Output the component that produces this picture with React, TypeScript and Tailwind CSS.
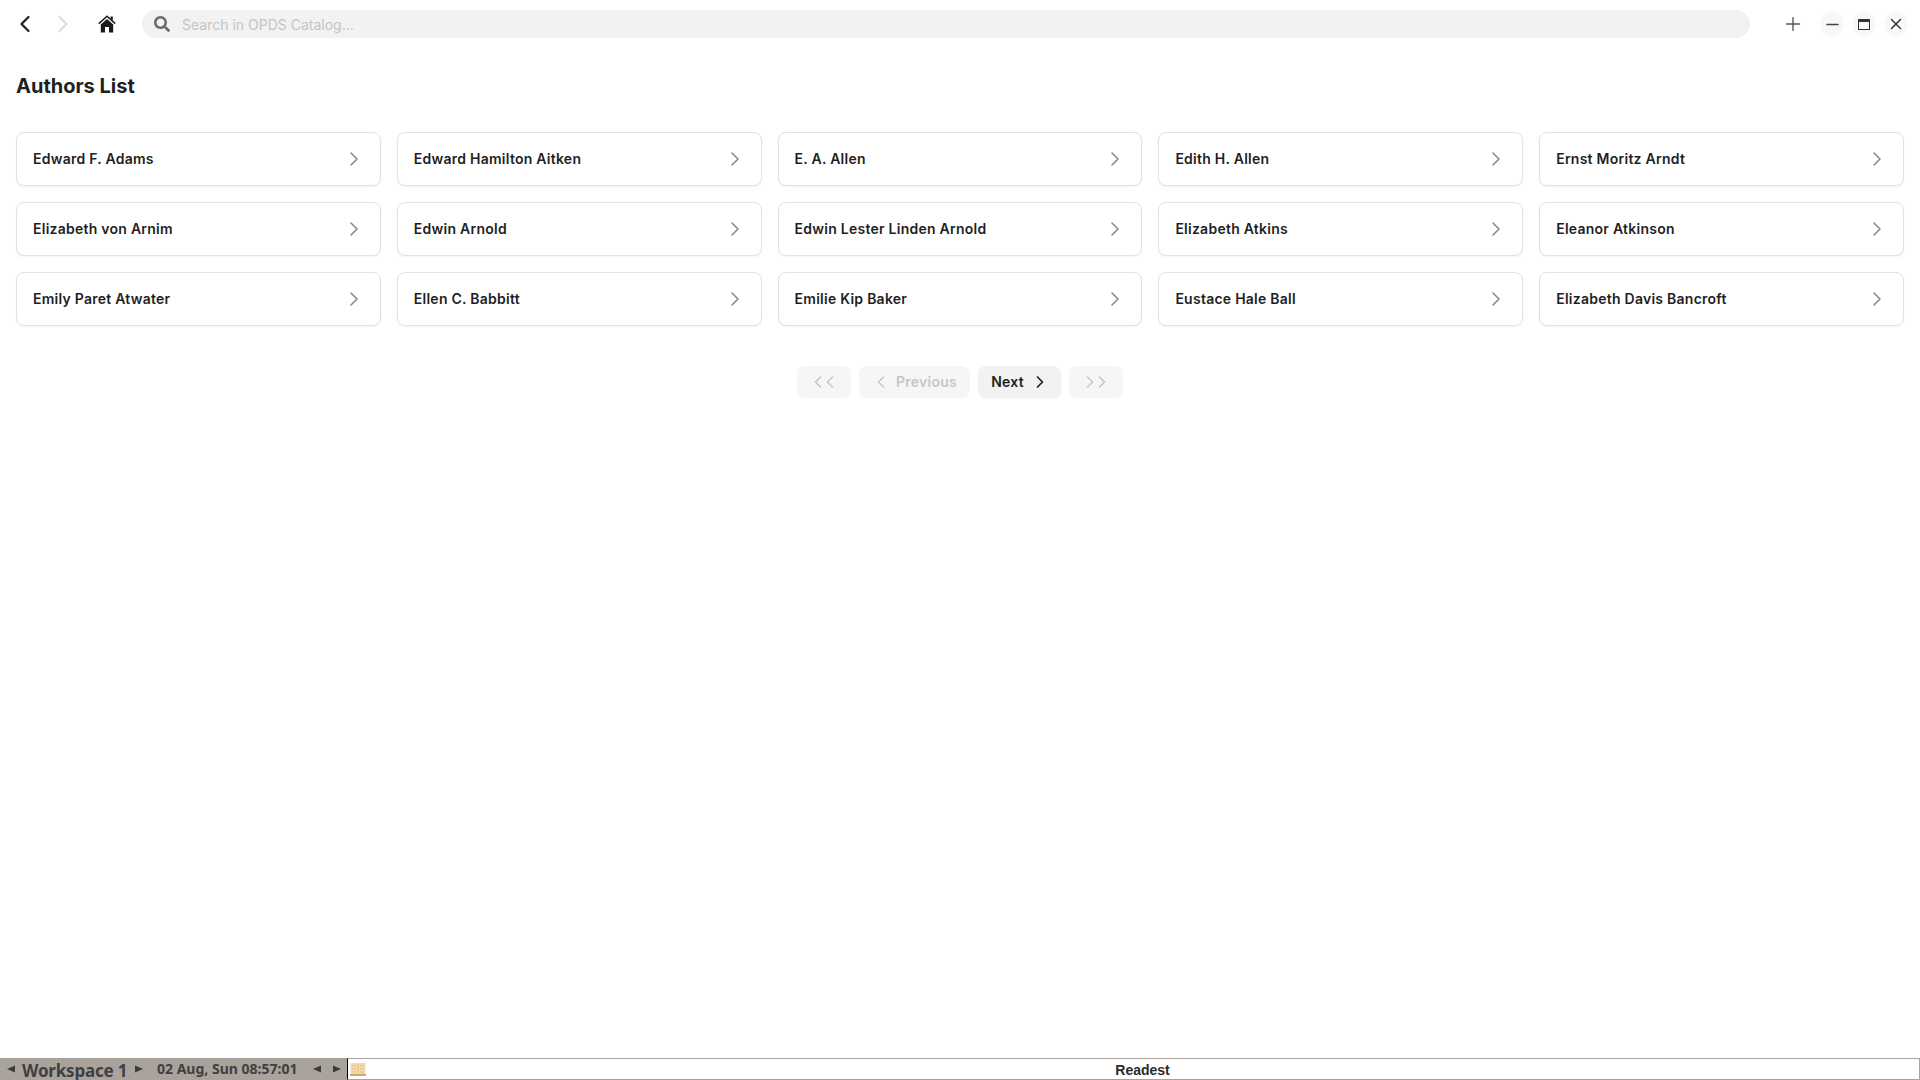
import { ChevronLeft, ChevronRight, Plus, Minus, X } from "lucide-react";
import { FaSearch } from "react-icons/fa";

const authors = [
  "Edward F. Adams",
  "Edward Hamilton Aitken",
  "E. A. Allen",
  "Edith H. Allen",
  "Ernst Moritz Arndt",
  "Elizabeth von Arnim",
  "Edwin Arnold",
  "Edwin Lester Linden Arnold",
  "Elizabeth Atkins",
  "Eleanor Atkinson",
  "Emily Paret Atwater",
  "Ellen C. Babbitt",
  "Emilie Kip Baker",
  "Eustace Hale Ball",
  "Elizabeth Davis Bancroft",
];

function Triangle({ dir }: { dir: "left" | "right" }) {
  return (
    <svg width="8" height="8" viewBox="0 0 8 8" className="shrink-0">
      <path d={dir === "left" ? "M0 4 L8 0.5 V7.5 Z" : "M8 4 L0 0.5 V7.5 Z"} fill="#3b3b3b" />
    </svg>
  );
}

function BookIcon() {
  return (
    <svg width="16" height="14" viewBox="0 0 16 14" className="shrink-0">
      <path d="M0.5 1 H7.5 L8 2 L8.5 1 H15.5 V12 H0.5 Z" fill="#f3dcae" />
      <path d="M8 2 V12 M2 4 H6 M2 7 H6 M2 10 H6 M10 4 H14 M10 7 H14 M10 10 H14" stroke="#e8bf7c" strokeWidth="1" />
      <path d="M0 13 H16" stroke="#c08a45" strokeWidth="1.5" />
    </svg>
  );
}

function HomeIcon() {
  return (
    <svg width="18" height="18" viewBox="0 0 18 18" className="ml-[21px] shrink-0 text-[#1a1a1a]">
      <path d="M0.8 8.6 L9 1.3 L17.2 8.6" fill="none" stroke="currentColor" strokeWidth="1.5" />
      <path d="M12.5 1.5 H14.8 V5.5 L12.5 3.5 Z" fill="currentColor" />
      <path
        d="M2.8 9.4 L9 3.9 L15.2 9.4 V17.5 H11 V12 H7 V17.5 H2.8 Z"
        fill="currentColor"
      />
    </svg>
  );
}

function Header() {
  return (
    <header className="flex h-12 shrink-0 items-center pl-[11px]">
      <div className="flex w-[131px] items-center">
        <ChevronLeft size={28} strokeWidth={1.9} className="text-[#1f1f1f]" />
        <ChevronRight size={28} strokeWidth={1.9} className="ml-[10px] text-[#dcdcdc]" />
        <HomeIcon />
      </div>
      <div className="flex h-[28px] w-[1608px] items-center rounded-full bg-[#f2f2f2] pl-[12px]">
        <FaSearch size={16} className="text-[#6b6b6b]" />
        <span className="ml-[12px] text-[14px] text-[#c4c4c4]">Search in OPDS Catalog...</span>
      </div>
      <div className="ml-[32px] flex items-center">
        <Plus size={22} strokeWidth={1.5} className="text-[#555555]" />
        <div className="ml-[16px] flex h-6 w-6 items-center justify-center rounded-full bg-[#f8f8f8]">
          <Minus size={19} strokeWidth={1.75} className="text-[#444444]" />
        </div>
        <div className="ml-2 flex h-6 w-6 items-center justify-center rounded-full bg-[#f8f8f8]">
          <div className="h-[11px] w-[12px] border-[1.5px] border-t-[3px] border-[#333333]" />
        </div>
        <div className="ml-2 flex h-6 w-6 items-center justify-center rounded-full bg-[#f8f8f8]">
          <X size={18} strokeWidth={1.9} className="text-[#333333]" />
        </div>
      </div>
    </header>
  );
}

function AuthorCard({ name }: { name: string }) {
  return (
    <div className="flex h-[54px] items-center justify-between rounded-lg border border-[#e2e2e2] bg-white pl-4 pr-[14px] shadow-[0_1px_2px_rgba(0,0,0,0.05)]">
      <span className="-mt-[1px] text-[14px] font-semibold tracking-[0.25px] text-[#1f1f1f]">{name}</span>
      <ChevronRight size={24} strokeWidth={1.6} className="text-[#8a8a8a]" />
    </div>
  );
}

function Pagination() {
  const disabled = "flex h-8 items-center justify-center rounded-lg bg-[#f6f6f6] text-[#c6c6c6]";
  return (
    <div className="mt-[40px] flex justify-center gap-2">
      <div className={`${disabled} w-[54px]`}>
        <ChevronLeft size={20} strokeWidth={1.75} />
        <ChevronLeft size={20} strokeWidth={1.75} className="-ml-2" />
      </div>
      <div className={`${disabled} w-[111px] gap-[5px] pr-[1px] text-[14px] font-semibold tracking-[0.25px]`}>
        <ChevronLeft size={20} strokeWidth={1.75} />
        <span className="-mt-[1px]">Previous</span>
      </div>
      <div className="flex h-8 w-[83px] items-center justify-center gap-[6px] rounded-lg bg-[#f2f2f2] pl-[2px] text-[14px] font-semibold tracking-[0.25px] text-[#1f1f1f] shadow-[0_1px_2px_rgba(0,0,0,0.05)]">
        <span className="-mt-[1px]">Next</span>
        <ChevronRight size={20} strokeWidth={2} />
      </div>
      <div className={`${disabled} w-[54px]`}>
        <ChevronRight size={20} strokeWidth={1.75} />
        <ChevronRight size={20} strokeWidth={1.75} className="-ml-2" />
      </div>
    </div>
  );
}

function Taskbar() {
  return (
    <footer className="flex h-[22px] shrink-0 items-stretch font-['Noto_Sans',sans-serif] font-bold whitespace-nowrap text-[#3d3d3d]">
      <div className="flex w-[347px] shrink-0 items-center bg-[#a9a39b] pl-[7px]">
        <Triangle dir="left" />
        <span className="ml-[7px] w-[105px] shrink-0 pt-[2px] text-[17px] leading-none tracking-[-0.2px] text-[#3f3f44]">Workspace 1</span>
        <span className="ml-[8px]"><Triangle dir="right" /></span>
        <span className="ml-[14px] w-[141px] shrink-0 text-[14px] leading-none text-[#3f3f44]">02 Aug, Sun 08:57:01</span>
        <span className="ml-[15px]"><Triangle dir="left" /></span>
        <span className="ml-[12px]"><Triangle dir="right" /></span>
      </div>
      <div className="flex flex-1 items-center border border-l-black border-[#a9a39b] bg-white pl-[2px]">
        <BookIcon />
        <span className="flex-1 pt-[1px] text-center font-['Liberation_Sans',sans-serif] text-[14px] leading-none text-[#2b2b2b]">
          Readest
        </span>
      </div>
    </footer>
  );
}

export default function App() {
  return (
    <div className="flex h-screen flex-col overflow-hidden bg-white font-['Inter',sans-serif]">
      <Header />
      <main className="flex-1 px-4">
        <h1 className="mt-[24px] text-[20px] leading-7 font-bold text-[#1f1f1f]">Authors List</h1>
        <div className="mt-[32px] grid grid-cols-5 gap-4">
          {authors.map((name) => (
            <AuthorCard key={name} name={name} />
          ))}
        </div>
        <Pagination />
      </main>
      <Taskbar />
    </div>
  );
}
